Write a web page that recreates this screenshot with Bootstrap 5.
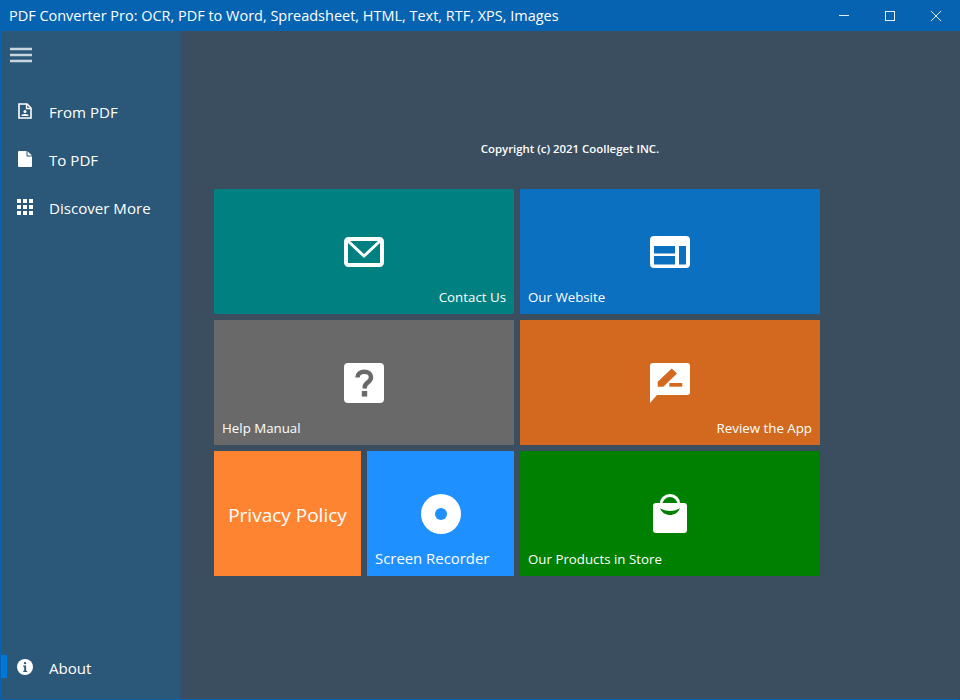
<!DOCTYPE html>
<html lang="en">
<head>
<meta charset="utf-8">
<title>PDF Converter Pro</title>
<link href="https://cdn.jsdelivr.net/npm/bootstrap@5.3.0/dist/css/bootstrap.min.css" rel="stylesheet">
<style>
html, body { height: 100%; margin: 0; overflow: hidden; }
body { font-family: "Open Sans", "Noto Sans", sans-serif; color: #fff; background: #3a4e60; }
.app-window { height: 700px; width: 960px; border: 1px solid #0563b1; border-top: 0; border-right-color: #3a4e60; border-bottom-color: #0563b1; }
.title-bar { height: 31px; background: #0563b1; margin: 0 -1px 0 -1px; padding: 0 1px 0 9px; font-size: 14.47px; }
.win-btn { width: 46px; height: 31px; }
.side-pane { width: 180px; background: #2b5778; }
.burger { height: 48px; padding: 0 0 0 9px; margin-bottom: 9px; }
.nav-row { height: 48px; font-size: 15.1px; padding-left: 14px; }
.nav-row .ico { width: 20px; margin-right: 14px; margin-top: -2px; }
.about-row { position: relative; margin-bottom: 7px; }
.active-mark { position: absolute; left: 0; top: 11px; width: 6px; height: 23px; background: #0078d7; }
.main-pane { padding-left: 33px; }
.copyright { height: 158px; padding-top: 109px; padding-right: 33px; font-size: 11.4px; text-align: center; font-weight: 600; line-height: 18px; }
.tile-grid { display: grid; grid-template-columns: 147px 147px 300px; grid-template-rows: repeat(3, 125px); gap: 6px; width: 606px; }
.tile { position: relative; color: #fff; font-size: 13.3px; }
.tile svg { display: block; }
.tile-wide { grid-column: span 2; }
.tile-cap { position: absolute; bottom: 7px; line-height: 20px; }
.cap-l { left: 8px; }
.cap-r { right: 8px; }
.cap-big { font-size: 14.9px; bottom: 8px; }
.bg-teal { background: #008080; }
.bg-web { background: #0c70c0; }
.bg-help { background: #696969; }
.bg-review { background: #d2691e; }
.bg-privacy { background: #ff8431; font-size: 19px; padding-top: 4px; }
.bg-rec { background: #1e90ff; }
.bg-store { background: #008000; }
</style>
</head>
<body>
<div class="app-window d-flex flex-column">
  <div class="title-bar d-flex align-items-center justify-content-between">
    <span>PDF Converter Pro: OCR, PDF to Word, Spreadsheet, HTML, Text, RTF, XPS, Images</span>
    <div class="d-flex">
      <div class="win-btn d-flex align-items-center justify-content-center"><svg width="10" height="10" viewBox="0 0 10 10"><path d="M0 4.500h10" stroke="#e6eef6" fill="none"/></svg></div>
      <div class="win-btn d-flex align-items-center justify-content-center"><svg width="10" height="10" viewBox="0 0 10 10"><rect x=".5" y=".5" width="9" height="9" stroke="#e6eef6" fill="none"/></svg></div>
      <div class="win-btn d-flex align-items-center justify-content-center"><svg width="10" height="10" viewBox="0 0 10 10"><path d="M0 0l10 10M10 0L0 10" stroke="#e6eef6" fill="none"/></svg></div>
    </div>
  </div>
  <div class="d-flex flex-grow-1">
    <div class="side-pane d-flex flex-column">
      <div class="burger d-flex align-items-center">
        <svg width="22" height="16" viewBox="0 0 22 16"><path d="M0 2h22M0 8h22M0 14h22" stroke="#c9d5df" stroke-width="2.400" fill="none"/></svg>
      </div>
      <div class="nav-row d-flex align-items-center">
        <span class="ico d-flex justify-content-center"><svg width="14" height="16" viewBox="0 0 14 16"><path d="M1 1h8l4 4v10H1z" fill="none" stroke="#fff" stroke-width="1.6"/><path d="M8.500 1v4.500H13" fill="none" stroke="#fff" stroke-width="1.3"/><circle cx="7" cy="8.600" r="1.500" fill="#fff"/><path d="M3.500 13v-1.200q3.500-1.800 7 0V13z" fill="#fff"/></svg></span>From PDF
      </div>
      <div class="nav-row d-flex align-items-center">
        <span class="ico d-flex justify-content-center"><svg width="14" height="16" viewBox="0 0 14 16"><path d="M1 0h7.500v5.500H14V15a1 1 0 0 1-1 1H1a1 1 0 0 1-1-1V1a1 1 0 0 1 1-1z" fill="#fff"/><path d="M9.500 0.300L14 4.600H9.500z" fill="#fff"/></svg></span>To PDF
      </div>
      <div class="nav-row d-flex align-items-center">
        <span class="ico d-flex justify-content-center"><svg width="16" height="16" viewBox="0 0 16 16" fill="#fff"><rect width="4" height="4"/><rect x="6" width="4" height="4"/><rect x="12" width="4" height="4"/><rect y="6" width="4" height="4"/><rect x="6" y="6" width="4" height="4"/><rect x="12" y="6" width="4" height="4"/><rect y="12" width="4" height="4"/><rect x="6" y="12" width="4" height="4"/><rect x="12" y="12" width="4" height="4"/></svg></span>Discover More
      </div>
      <div class="nav-row about-row d-flex align-items-center mt-auto">
        <span class="active-mark"></span>
        <span class="ico d-flex justify-content-center"><svg width="16" height="16" viewBox="0 0 16 16"><circle cx="8" cy="8" r="8" fill="#fff"/><rect x="6.900" y="3" width="2.300" height="2.300" rx="1.100" fill="#2b5778"/><path d="M6.200 6.600h2.900v5.200h1v1.200H6.200v-1.200h1V7.800h-1z" fill="#2b5778"/></svg></span>About
      </div>
    </div>
    <div class="main-pane flex-grow-1">
      <div class="copyright">Copyright (c) 2021 Coolleget INC.</div>
      <div class="tile-grid">
        <div class="tile tile-wide bg-teal d-flex align-items-center justify-content-center">
          <svg width="40" height="30" viewBox="0 0 40 30"><rect x="2" y="2" width="36" height="26" rx="2.500" fill="none" stroke="#fff" stroke-width="4"/><path d="M4 4l16 15L36 4" fill="none" stroke="#fff" stroke-width="3"/></svg>
          <span class="tile-cap cap-r">Contact Us</span>
        </div>
        <div class="tile bg-web d-flex align-items-center justify-content-center">
          <svg width="40" height="32" viewBox="0 0 40 32"><path d="M4 0h32a4 4 0 0 1 4 4v24a4 4 0 0 1-4 4H4a4 4 0 0 1-4-4V4a4 4 0 0 1 4-4z" fill="#fff"/><g fill="#0c70c0"><rect x="4" y="10" width="21" height="7.500"/><rect x="4" y="20" width="21" height="8.500"/><rect x="29" y="10" width="7" height="18.500"/></g></svg>
          <span class="tile-cap cap-l">Our Website</span>
        </div>
        <div class="tile tile-wide bg-help d-flex align-items-center justify-content-center">
          <svg width="40" height="40" viewBox="0 0 40 40"><rect width="40" height="40" rx="4" fill="#fff"/><path d="M13.500 14.500c0-3.500 3-5.800 6.800-5.800s6.700 2.100 6.700 5.500c0 2.800-1.600 4.100-3.400 5.400-1.800 1.300-2.800 2.400-2.800 4.400v1.400" fill="none" stroke="#696969" stroke-width="4.500"/><rect x="17.800" y="28" width="5.400" height="5.600" fill="#696969"/></svg>
          <span class="tile-cap cap-l">Help Manual</span>
        </div>
        <div class="tile bg-review d-flex align-items-center justify-content-center">
          <svg width="40" height="40" viewBox="0 0 40 40"><path d="M3 0h34a3 3 0 0 1 3 3v26a3 3 0 0 1-3 3H7L0 40V3a3 3 0 0 1 3-3z" fill="#fff"/><path d="M7.700 18.800L21.700 5.500L27 10.500L13.300 23.700H7.700z" fill="#d2691e"/><rect x="19.300" y="20" width="13" height="3.700" fill="#d2691e"/></svg>
          <span class="tile-cap cap-r">Review the App</span>
        </div>
        <div class="tile bg-privacy d-flex align-items-center justify-content-center">Privacy Policy</div>
        <div class="tile bg-rec d-flex align-items-center justify-content-center">
          <svg width="40" height="40" viewBox="0 0 40 40"><circle cx="20" cy="20" r="20" fill="#fff"/><circle cx="20" cy="20" r="6" fill="#1e90ff"/></svg>
          <span class="tile-cap cap-l cap-big">Screen Recorder</span>
        </div>
        <div class="tile bg-store d-flex align-items-center justify-content-center">
          <svg width="34" height="39" viewBox="0 0 34 39"><path d="M3 9h28a3 3 0 0 1 3 3v24a3 3 0 0 1-3 3H3a3 3 0 0 1-3-3V12a3 3 0 0 1 3-3z" fill="#fff"/><circle cx="17" cy="10.500" r="9" fill="none" stroke="#fff" stroke-width="3"/><path d="M7 14C9 19 13 21 17 21S25 19 27 14C24 16 21 17 17 17S10 16 7 14z" fill="#008000"/></svg>
          <span class="tile-cap cap-l">Our Products in Store</span>
        </div>
      </div>
    </div>
  </div>
</div>
<script src="https://cdn.jsdelivr.net/npm/bootstrap@5.3.0/dist/js/bootstrap.bundle.min.js"></script>
</body>
</html>
